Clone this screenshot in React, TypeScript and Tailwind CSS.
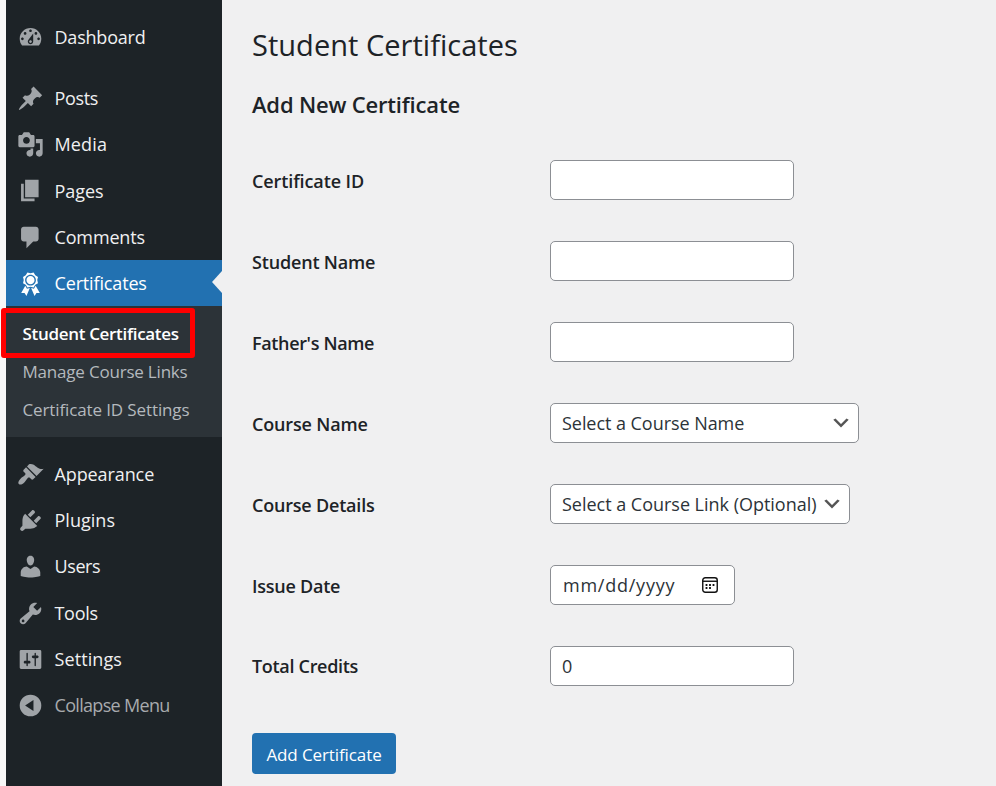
import React from "react";

const icons = {
  dashboard:
    "M3.76 16h12.48c1.1-1.37 1.76-3.11 1.76-5 0-4.42-3.58-8-8-8s-8 3.58-8 8c0 1.89.66 3.63 1.76 5zM10 4c.55 0 1 .45 1 1s-.45 1-1 1-1-.45-1-1 .45-1 1-1zM6 6c.55 0 1 .45 1 1s-.45 1-1 1-1-.45-1-1 .45-1 1-1zm8 0c.55 0 1 .45 1 1s-.45 1-1 1-1-.45-1-1 .45-1 1-1zm-5.37 5.55L12 7v6c0 1.1-.9 2-2 2s-2-.9-2-2c0-.57.24-1.08.63-1.45zM4 10c.55 0 1 .45 1 1s-.45 1-1 1-1-.45-1-1 .45-1 1-1zm12 0c.55 0 1 .45 1 1s-.45 1-1 1-1-.45-1-1 .45-1 1-1zm-5 3c0-.55-.45-1-1-1s-1 .45-1 1 .45 1 1 1 1-.45 1-1z",
  posts:
    "M10.44 3.02l1.82-1.82 6.36 6.35-1.83 1.82c-1.05-.68-2.48-.57-3.41.36l-.75.75c-.92.93-1.04 2.35-.35 3.41l-1.83 1.82-2.41-2.41-2.8 2.79c-.42.42-3.38 2.71-3.8 2.29s1.86-3.39 2.28-3.81l2.79-2.79L4.1 9.36l1.83-1.82c1.05.69 2.48.57 3.4-.36l.75-.75c.93-.92 1.05-2.35.36-3.41z",
  media:
    "M13 11V4c0-.55-.45-1-1-1h-1.67L9 1H5L3.67 3H2c-.55 0-1 .45-1 1v7c0 .55.45 1 1 1h10c.55 0 1-.45 1-1zM7 4.5c1.38 0 2.5 1.12 2.5 2.5S8.38 9.5 7 9.5 4.5 8.38 4.5 7 5.62 4.5 7 4.5zM14 6h5v10.5c0 1.38-1.12 2.5-2.5 2.5S14 17.88 14 16.5s1.12-2.5 2.5-2.5c.17 0 .34.02.5.05V9h-3V6zm-4 8.05V13h2v3.5c0 1.38-1.12 2.5-2.5 2.5S7 17.88 7 16.5 8.12 14 9.5 14c.17 0 .34.02.5.05z",
  pages: "M6 15V2h10v13H6zm-1 1h8v2H3V5h2v11z",
  comments:
    "M5 2h9c1.1 0 2 .9 2 2v7c0 1.1-.9 2-2 2h-2l-5 5v-5H5c-1.1 0-2-.9-2-2V4c0-1.1.9-2 2-2z",
  awards:
    "M4.46 5.16L5 7.46l-.54 2.29 2.01 1.24L7.7 13l2.3-.54 2.3.54 1.23-2.01 2.01-1.24L15 7.46l.54-2.3-2-1.24-1.24-2.01-2.3.55-2.29-.54-1.25 2zm5.55 6.34c-2.21 0-4-1.79-4-4 0-2.2 1.79-4 4-4 2.2 0 4 1.8 4 4 0 2.21-1.8 4-4 4zm-.02-1C8.33 10.5 7 9.16 7 7.5c0-1.65 1.33-3 2.99-3S13 5.85 13 7.5c0 1.66-1.35 3-3.01 3zm3.84 1.1l-1.28 2.24-2.08-.47L13 19.2l1.4-2.2h2.5zm-7.7.07l1.25 2.25 2.13-.51L7 19.2 5.6 17H3.1z",
  appearance:
    "M14.48 11.06L7.41 3.99l1.5-1.5c.5-.56 2.3-.47 3.51.32 1.21.8 1.43 1.28 2.91 2.1 1.18.64 2.45 1.26 4.45.85zm-.71.71L6.7 4.7 4.93 6.47c-.39.39-.39 1.02 0 1.41l1.06 1.06c.39.39.39 1.03 0 1.42-.6.6-1.43 1.11-2.21 1.69-.35.26-.7.53-1.01.84C1.43 14.23.4 16.08 1.4 17.07c.99 1 2.84-.03 4.18-1.36.31-.31.58-.66.85-1.02.57-.78 1.08-1.61 1.69-2.21.39-.39 1.02-.39 1.41 0l1.06 1.06c.39.39 1.02.39 1.41 0z",
  plugins:
    "M13.11 4.36L9.87 7.6 8 5.73l3.24-3.24c.35-.34 1.05-.2 1.56.32.52.51.66 1.21.31 1.55zm-8 1.77l.91-1.12 9.01 9.01-1.19.84c-.71.71-2.63 1.16-3.82 1.16H6.14L4.9 17.26c-.59.59-1.54.59-2.12 0-.59-.58-.59-1.53 0-2.12l1.24-1.24v-3.88c0-1.13.4-3.19 1.09-3.89zm7.26 3.97l3.24-3.24c.34-.35 1.04-.21 1.55.31.52.51.66 1.21.31 1.55l-3.24 3.25z",
  users:
    "M10 9.25c-2.27 0-2.73-3.44-2.73-3.44C7 4.02 7.82 2 9.97 2c2.16 0 2.98 2.02 2.71 3.81 0 0-.41 3.44-2.68 3.44zm0 2.57L12.72 10c2.39 0 4.52 2.33 4.52 4.53v2.49s-3.65 1.13-7.24 1.13c-3.65 0-7.24-1.13-7.24-1.13v-2.49c0-2.25 1.94-4.48 4.47-4.48z",
  tools:
    "M16.68 9.77c-1.34 1.34-3.3 1.67-4.95.99l-5.41 6.52c-.99.99-2.59.99-3.58 0s-.99-2.59 0-3.57l6.52-5.42c-.68-1.65-.35-3.61.99-4.95 1.28-1.28 3.12-1.62 4.72-1.06l-2.89 2.89 2.82 2.82 2.86-2.87c.53 1.58.18 3.39-1.08 4.65zM3.81 16.21c.4.39 1.04.39 1.43 0 .4-.4.4-1.04 0-1.43-.39-.4-1.03-.4-1.43 0-.39.39-.39 1.03 0 1.43z",
  settings:
    "M18 16V4c0-.55-.45-1-1-1H3c-.55 0-1 .45-1 1v12c0 .55.45 1 1 1h14c.55 0 1-.45 1-1zM8 11h1c.55 0 1 .45 1 1s-.45 1-1 1H8v1.5c0 .28-.22.5-.5.5s-.5-.22-.5-.5V13H6c-.55 0-1-.45-1-1s.45-1 1-1h1V5.5c0-.28.22-.5.5-.5s.5.22.5.5V11zm5-2h-1c-.55 0-1-.45-1-1s.45-1 1-1h1V5.5c0-.28.22-.5.5-.5s.5.22.5.5V7h1c.55 0 1 .45 1 1s-.45 1-1 1h-1v5.5c0 .28-.22.5-.5.5s-.5-.22-.5-.5V9z",
  collapse:
    "M10 2a8 8 0 1 0 0 16 8 8 0 0 0 0-16zM12.2 6v8L6 10z",
};

type MenuItemProps = {
  icon: keyof typeof icons;
  label: string;
  tracking: string;
  tone?: string;
};

function MenuItem({ icon, label, tracking, tone = "text-[#f0f0f1]" }: MenuItemProps) {
  return (
    <a className={`flex h-[46.25px] shrink-0 items-center pl-[11px] text-[18px] ${tone}`}>
      <svg
        viewBox="0 0 20 20"
        className={`mr-[10.5px] size-[27px] shrink-0 ${icon === "awards" ? "text-white" : "text-[#a0a4a8]"}`}
      >
        <path fill="currentColor" fillRule="evenodd" d={icons[icon]} />
      </svg>
      <span className={`whitespace-nowrap ${tracking}`}>{label}</span>
    </a>
  );
}

function Sidebar() {
  return (
    <aside className="flex w-[216px] shrink-0 flex-col bg-[#1d2327] pt-[14.5px]">
      <MenuItem icon="dashboard" label="Dashboard" tracking="tracking-[-0.21px]" />
      <div className="h-[14.5px] shrink-0" />
      <MenuItem icon="posts" label="Posts" tracking="tracking-[-0.35px]" />
      <MenuItem icon="media" label="Media" tracking="tracking-[0.15px]" />
      <MenuItem icon="pages" label="Pages" tracking="pt-px tracking-[-0.06px]" />
      <MenuItem icon="comments" label="Comments" tracking="tracking-[-0.15px]" />
      <div className="relative h-[45.75px] shrink-0 bg-[#2271b1]">
        <MenuItem icon="awards" label="Certificates" tracking="tracking-[-0.15px]" tone="text-white" />
        <span className="absolute right-0 top-[11px] border-y-[11px] border-r-[10.5px] border-y-transparent border-r-[#f0f0f1]" />
      </div>
      <nav className="relative flex h-[131px] shrink-0 flex-col bg-[#2c3338] pl-[16.5px] pt-[8.5px] text-[17px] text-[#b4b9be]">
        <span className="absolute left-[-5px] top-[2px] h-[50px] w-[194px] rounded-[3px] border-[5px] border-[#ff0000]" />
        <a className="flex h-[38px] items-center whitespace-nowrap font-semibold tracking-[-0.32px] text-white">Student Certificates</a>
        <a className="flex h-[38px] items-center whitespace-nowrap tracking-[-0.2px]">Manage Course Links</a>
        <a className="flex h-[38px] items-center whitespace-nowrap tracking-[-0.12px]">Certificate ID Settings</a>
      </nav>
      <div className="h-[14.25px] shrink-0" />
      <MenuItem icon="appearance" label="Appearance" tracking="tracking-[-0.1px]" />
      <MenuItem icon="plugins" label="Plugins" tracking="tracking-[0.02px]" />
      <MenuItem icon="users" label="Users" tracking="tracking-[-0.4px]" />
      <MenuItem icon="tools" label="Tools" tracking="tracking-[-0.3px]" />
      <MenuItem icon="settings" label="Settings" tracking="tracking-[0.1px]" />
      <MenuItem icon="collapse" label="Collapse Menu" tracking="tracking-[-0.68px]" tone="text-[#a7aaad]" />
    </aside>
  );
}

function Field({ label, tracking, children }: { label: string; tracking: string; children: React.ReactNode }) {
  return (
    <div className="flex h-10 items-center">
      <label className={`w-[298px] shrink-0 whitespace-nowrap text-[18px] font-semibold text-[#1d2327] ${tracking}`}>
        {label}
      </label>
      {children}
    </div>
  );
}

const box = "flex h-10 items-center whitespace-nowrap rounded-[5px] border border-[#8c8f94] bg-white text-[18px] text-[#2c3338]";

function TextBox({ value = "" }: { value?: string }) {
  return <div className={`${box} w-[244px] pl-[11px]`}>{value}</div>;
}

function Chevron() {
  return (
    <svg viewBox="0 0 20 20" className="size-[22px] shrink-0">
      <path d="M5 6l5 5 5-5 2 1-7 7-7-7 2-1z" fill="#555" />
    </svg>
  );
}

function CalendarIcon() {
  return (
    <svg viewBox="0 0 18 18" className="size-[18px] shrink-0" fill="none" stroke="#111" strokeWidth="1.4">
      <rect x="1.75" y="1.75" width="14.5" height="14.5" rx="2.5" />
      <path d="M1.5 5.25h15" />
      <path d="M8.1 9h1.8M11.6 9h1.8M4.6 12h1.8M8.1 12h1.8M4.6 9h1.8" strokeWidth="1.8" />
    </svg>
  );
}

export default function App() {
  return (
    <div className="flex h-[786px] w-[996px] overflow-hidden bg-[#f0f0f1] pl-[6px] font-['Open_Sans','Noto_Sans',sans-serif] shadow-[inset_6px_0_0_#f8f8f8]">
      <Sidebar />
      <main className="flex flex-1 flex-col items-start pl-[30px] pt-[25px]">
        <h1 className="h-10 text-[29px] leading-10 tracking-[0.03px] text-[#1d2327]">Student Certificates</h1>
        <h2 className="mt-[24px] h-[30px] text-[22px] font-semibold leading-[30px] tracking-[-0.18px] text-[#1d2327]">Add New Certificate</h2>
        <form className="mt-[41px] flex flex-col gap-[41px]">
          <Field label="Certificate ID" tracking="pt-[2px] tracking-[-0.1px]"><TextBox /></Field>
          <Field label="Student Name" tracking="pt-[2px] tracking-[-0.18px]"><TextBox /></Field>
          <Field label="Father's Name" tracking="pt-[2px] tracking-[-0.35px]"><TextBox /></Field>
          <Field label="Course Name" tracking="pt-[2px] tracking-[-0.17px]">
            <div className={`${box} w-[309px] justify-between pl-[11px] pr-[6px]`}>
              <span className="tracking-[-0.05px]">Select a Course Name</span>
              <Chevron />
            </div>
          </Field>
          <Field label="Course Details" tracking="pt-[2px] tracking-[-0.2px]">
            <div className={`${box} w-[300px] justify-between pl-[11px] pr-[6px]`}>
              <span className="tracking-[-0.02px]">Select a Course Link (Optional)</span>
              <Chevron />
            </div>
          </Field>
          <Field label="Issue Date" tracking="pt-[2px] tracking-[-0.25px]">
            <div className={`${box} w-[185px] justify-between pl-3 pr-[15px]`}>
              <span className="tracking-[0.76px]">mm/dd/yyyy</span>
              <CalendarIcon />
            </div>
          </Field>
          <Field label="Total Credits" tracking="pt-0 tracking-[-0.31px]"><TextBox value="0" /></Field>
        </form>
        <button className="mt-[47px] h-[41px] w-36 whitespace-nowrap rounded-[4px] bg-[#2271b1] pt-[2px] text-[17px] tracking-[-0.1px] text-white">
          Add Certificate
        </button>
      </main>
    </div>
  );
}
